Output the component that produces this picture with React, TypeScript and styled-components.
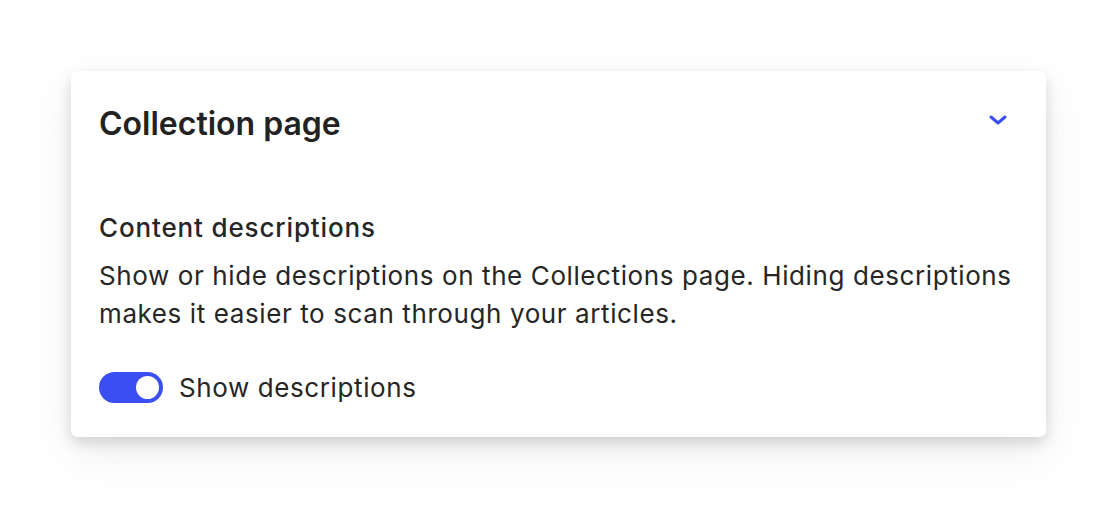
import styled, { createGlobalStyle } from 'styled-components'

const GlobalStyle = createGlobalStyle`
  html, body {
    margin: 0;
    background: #ffffff;
    font-family: Inter, 'Noto Sans', sans-serif;
    color: #262626;
  }
`

const Page = styled.main`
  min-height: 100vh;
  box-sizing: border-box;
  padding: 71px 71px 72px 71px;
`

const Card = styled.section`
  width: 975px;
  height: 366px;
  box-sizing: border-box;
  background: #ffffff;
  border-radius: 7px;
  box-shadow: 0 6px 14px rgba(0, 0, 0, 0.14), 0 16px 48px rgba(0, 0, 0, 0.07);
  padding: 30px 28px 0 28px;
`

const Header = styled.div`
  display: flex;
  align-items: center;
  justify-content: space-between;
  height: 44px;
`

const Title = styled.h2`
  margin: 0;
  font-size: 32px;
  font-weight: 600;
  color: #222;
`

const Chevron = styled.button`
  background: none;
  border: none;
  padding: 0;
  margin-right: 10px;
  margin-top: -6px;
  display: flex;
  cursor: pointer;
`

const Section = styled.div`
  margin-top: 67px;
  display: flex;
  flex-direction: column;
`

const SectionTitle = styled.h3`
  margin: 0;
  font-size: 26px;
  font-weight: 500;
  line-height: 32px;
  letter-spacing: 0.85px;
  color: #262626;
`

const Description = styled.p`
  margin: 13px 0 0 0;
  font-size: 26px;
  font-weight: 400;
  line-height: 38px;
  letter-spacing: 0.6px;
  color: #262626;
`

const ToggleRow = styled.label`
  display: flex;
  align-items: center;
  gap: 16px;
  margin-top: 39px;
  font-size: 26px;
  letter-spacing: 0.6px;
  color: #262626;
  cursor: pointer;
`

const Track = styled.span<{ $on: boolean }>`
  position: relative;
  width: 64px;
  height: 31px;
  border-radius: 16px;
  background: ${(p) => (p.$on ? '#3a4ef2' : '#c8c8c8')};
  flex-shrink: 0;
`

const Knob = styled.span<{ $on: boolean }>`
  position: absolute;
  top: 4px;
  left: ${(p) => (p.$on ? '37px' : '4px')};
  width: 23px;
  height: 23px;
  border-radius: 50%;
  background: #ffffff;
`

const App = () => {
  const on = true
  return (
    <>
      <GlobalStyle />
      <Page>
        <Card>
          <Header>
            <Title>Collection page</Title>
            <Chevron aria-label='Collapse'>
              <svg width='20' height='12' viewBox='0 0 20 12' fill='none'>
                <path
                  d='M3 3l7 6 7-6'
                  stroke='#3a4ef2'
                  strokeWidth='3'
                  strokeLinecap='round'
                  strokeLinejoin='round'
                />
              </svg>
            </Chevron>
          </Header>

          <Section>
            <SectionTitle>Content descriptions</SectionTitle>
            <Description>
              Show or hide descriptions on the Collections page. Hiding
              descriptions makes it easier to scan through your articles.
            </Description>
            <ToggleRow>
              <Track $on={on}>
                <Knob $on={on} />
              </Track>
              Show descriptions
            </ToggleRow>
          </Section>
        </Card>
      </Page>
    </>
  )
}

export default App
